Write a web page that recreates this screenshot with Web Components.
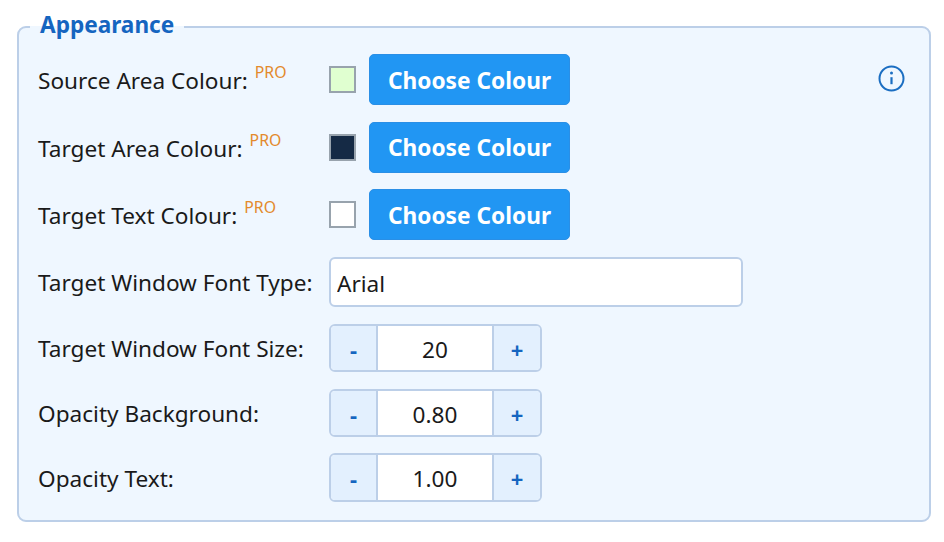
<!DOCTYPE html>
<html lang="en"><head><meta charset="utf-8"><title>Appearance</title>
<style>html,body{margin:0;background:#fff;font-family:"Noto Sans","Open Sans",sans-serif;color:#1a1a1a}
body{padding:10px 13px 0 17px}</style></head><body>
<appearance-panel>
<setting-row label="Source Area Colour:" pro><colour-pick colour="#e0ffd0"></colour-pick><info-icon></info-icon></setting-row>
<setting-row label="Target Area Colour:" pro><colour-pick colour="#152a45"></colour-pick></setting-row>
<setting-row label="Target Text Colour:" pro><colour-pick colour="#ffffff"></colour-pick></setting-row>
<setting-row label="Target Window Font Type:"><font-field value="Arial"></font-field></setting-row>
<setting-row label="Target Window Font Size:"><num-stepper value="20"></num-stepper></setting-row>
<setting-row label="Opacity Background:"><num-stepper value="0.80"></num-stepper></setting-row>
<setting-row label="Opacity Text:"><num-stepper value="1.00"></num-stepper></setting-row>
</appearance-panel>
<script>
function def(name,html,init){customElements.define(name,class extends HTMLElement{connectedCallback(){if(this.shadowRoot)return;const s=this.attachShadow({mode:'open'});s.innerHTML=html;init&&init(this,s);}});}
def('appearance-panel',`<style>:host{display:block}
fieldset{margin:0;border:2px solid #bccfe8;border-radius:9px;background:#eff7ff;padding:11px 19px 18.6px;min-width:0}
legend{margin-left:-8px;padding:0 10px 4px;font-size:22.6px;font-weight:700;color:#1565c0;line-height:29px}
.rows{display:flex;flex-direction:column;gap:16.6px}</style>
<fieldset><legend>Appearance</legend><div class="rows"><slot></slot></div></fieldset>`);
def('setting-row',`<style>:host{display:flex;align-items:center;min-height:48.2px}
.l{width:291px;flex:none;font-size:22.6px;line-height:30px;white-space:nowrap;display:flex;padding-top:3px}
sup{font-size:15.8px;line-height:18px;color:#e38a2c;margin:-3px 0 0 7px;align-self:flex-start;display:none}
:host([pro]) sup{display:block}
.c{flex:1;display:flex;align-items:center}</style>
<span class="l"><span id="t"></span><sup>PRO</sup></span><span class="c"><slot></slot></span>`,(h,s)=>{s.getElementById('t').textContent=h.getAttribute('label')});
def('colour-pick',`<style>:host{display:flex;align-items:center;gap:13px;flex:none}
i{display:block;box-sizing:border-box;width:27px;height:27px;border:2px solid #98a3ad}
button{width:201px;height:51px;border:1px solid #2a8fe6;border-radius:5px;background:#2196f3;color:#fff;font:700 22.7px/1 "Noto Sans","Open Sans",sans-serif;padding:3px 0 0}</style>
<i></i><button>Choose Colour</button>`,(h,s)=>{s.querySelector('i').style.background=h.getAttribute('colour')});
def('info-icon',`<style>:host{display:block;margin:-2px 5px 0 auto;width:27px;height:27px}svg{display:block}</style>
<svg width="27" height="27" viewBox="0 0 27 27" fill="none" stroke="#1b6ec2" stroke-width="2"><circle cx="13.5" cy="13.5" r="12"/><path d="M13.5 12.2v7" stroke-width="2.2"/><circle cx="13.5" cy="8" r="1.5" fill="#1b6ec2" stroke="none"/></svg>`);
def('font-field',`<style>:host{display:block}
input{box-sizing:border-box;display:block;width:414px;height:50.4px;border:2px solid #bccfe8;border-radius:6px;background:#fff;font:22.6px "Noto Sans","Open Sans",sans-serif;color:#1a1a1a;padding:3px 6px 0;outline:none}</style>
<input>`,(h,s)=>{s.querySelector('input').value=h.getAttribute('value')});
def('num-stepper',`<style>:host{display:flex;box-sizing:border-box;width:213px;height:48.2px;border:2px solid #bccfe8;border-radius:6px;overflow:hidden;background:#fff}
b{flex:none;box-sizing:border-box;width:47px;display:flex;align-items:center;justify-content:center;background:#e3f0fe;color:#1565c0;font:700 22px "Noto Sans",sans-serif;padding-top:2px}
b:first-of-type{border-right:2px solid #bccfe8}b:last-of-type{border-left:2px solid #bccfe8;width:48px}
span{flex:1;display:flex;align-items:center;justify-content:center;font-size:22.6px;color:#1a1a1a;padding-top:3px}</style>
<b>-</b><span></span><b>+</b>`,(h,s)=>{s.querySelector('span').textContent=h.getAttribute('value')});
</script></body></html>
